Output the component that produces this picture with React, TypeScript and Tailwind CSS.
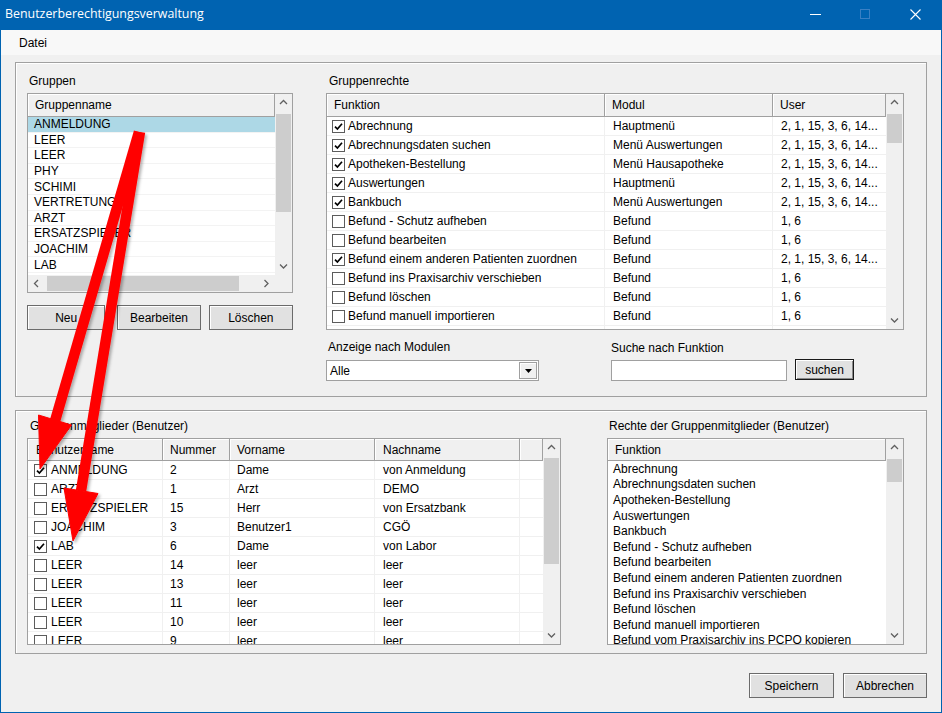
import React from 'react';

const font = "font-['Liberation_Sans',Arial,sans-serif]";

type RightRow = { on: boolean; fn: string; mod: string; user: string };

const many = '2, 1, 15, 3, 6, 14...';

const gruppenRechte: RightRow[] = [
  { on: true, fn: 'Abrechnung', mod: 'Hauptmenü', user: many },
  { on: true, fn: 'Abrechnungsdaten suchen', mod: 'Menü Auswertungen', user: many },
  { on: true, fn: 'Apotheken-Bestellung', mod: 'Menü Hausapotheke', user: many },
  { on: true, fn: 'Auswertungen', mod: 'Hauptmenü', user: many },
  { on: true, fn: 'Bankbuch', mod: 'Menü Auswertungen', user: many },
  { on: false, fn: 'Befund - Schutz aufheben', mod: 'Befund', user: '1, 6' },
  { on: false, fn: 'Befund bearbeiten', mod: 'Befund', user: '1, 6' },
  { on: true, fn: 'Befund einem anderen Patienten zuordnen', mod: 'Befund', user: many },
  { on: false, fn: 'Befund ins Praxisarchiv verschieben', mod: 'Befund', user: '1, 6' },
  { on: false, fn: 'Befund löschen', mod: 'Befund', user: '1, 6' },
  { on: false, fn: 'Befund manuell importieren', mod: 'Befund', user: '1, 6' },
  { on: false, fn: 'Befund vom Praxisarchiv ins PCPO kopieren', mod: 'Befund', user: '1, 6' },
];

const gruppen = [
  'ANMELDUNG',
  'LEER',
  'LEER',
  'PHY',
  'SCHIMI',
  'VERTRETUNG',
  'ARZT',
  'ERSATZSPIELER',
  'JOACHIM',
  'LAB',
];

type Member = { on: boolean; name: string; nr: string; vorname: string; nachname: string };

const mitglieder: Member[] = [
  { on: true, name: 'ANMELDUNG', nr: '2', vorname: 'Dame', nachname: 'von Anmeldung' },
  { on: false, name: 'ARZT', nr: '1', vorname: 'Arzt', nachname: 'DEMO' },
  { on: false, name: 'ERSATZSPIELER', nr: '15', vorname: 'Herr', nachname: 'von Ersatzbank' },
  { on: false, name: 'JOACHIM', nr: '3', vorname: 'Benutzer1', nachname: 'CGÖ' },
  { on: true, name: 'LAB', nr: '6', vorname: 'Dame', nachname: 'von Labor' },
  { on: false, name: 'LEER', nr: '14', vorname: 'leer', nachname: 'leer' },
  { on: false, name: 'LEER', nr: '13', vorname: 'leer', nachname: 'leer' },
  { on: false, name: 'LEER', nr: '11', vorname: 'leer', nachname: 'leer' },
  { on: false, name: 'LEER', nr: '10', vorname: 'leer', nachname: 'leer' },
  { on: false, name: 'LEER', nr: '9', vorname: 'leer', nachname: 'leer' },
];

const mitgliederRechte = [
  'Abrechnung',
  'Abrechnungsdaten suchen',
  'Apotheken-Bestellung',
  'Auswertungen',
  'Bankbuch',
  'Befund - Schutz aufheben',
  'Befund bearbeiten',
  'Befund einem anderen Patienten zuordnen',
  'Befund ins Praxisarchiv verschieben',
  'Befund löschen',
  'Befund manuell importieren',
  'Befund vom Praxisarchiv ins PCPO kopieren',
];

function Check({ on }: { on: boolean }) {
  return (
    <span className="flex h-[13px] w-[13px] shrink-0 items-center justify-center border border-[#5c5c5c] bg-white">
      {on && (
        <svg width="9" height="9" viewBox="0 0 9 9">
          <path d="M1 4.6 L3.4 7 L8 1.8" fill="none" stroke="#000" strokeWidth="1.7" />
        </svg>
      )}
    </span>
  );
}

function Chevron({ dir }: { dir: 'up' | 'down' | 'left' | 'right' }) {
  const d = {
    up: 'M1 5 L4.5 1.5 L8 5',
    down: 'M1 1.5 L4.5 5 L8 1.5',
    left: 'M5 1 L1.5 4.5 L5 8',
    right: 'M1.5 1 L5 4.5 L1.5 8',
  }[dir];
  const vertical = dir === 'up' || dir === 'down';
  return (
    <svg width={vertical ? 9 : 7} height={vertical ? 7 : 9} viewBox={vertical ? '0 0 9 7' : '0 0 7 9'}>
      <path d={d} fill="none" stroke="#606060" strokeWidth="1.3" />
    </svg>
  );
}

function VScroll({ thumb }: { thumb: string }) {
  return (
    <div className="flex w-[17px] shrink-0 flex-col bg-[#f0f0f0]">
      <div className="flex h-[17px] shrink-0 items-center justify-center">
        <Chevron dir="up" />
      </div>
      <div className="flex-1">
        <div className={`mx-[1px] bg-[#cdcdcd] ${thumb}`} />
      </div>
      <div className="flex h-[17px] shrink-0 items-center justify-center">
        <Chevron dir="down" />
      </div>
    </div>
  );
}

function HeadCell({ className, children }: { className: string; children?: React.ReactNode }) {
  return (
    <div
      className={`flex h-full shrink-0 items-center overflow-hidden whitespace-nowrap border-r border-[#a0a0a0] bg-[#f0f0f0] shadow-[inset_1px_1px_0_#ffffff] ${className}`}
    >
      {children}
    </div>
  );
}

function Button({ className, children }: { className: string; children: React.ReactNode }) {
  return (
    <div
      className={`flex items-center justify-center border border-[#6b6b6b] bg-[#e1e1e1] shadow-[inset_1px_1px_0_#ffffff] ${className}`}
    >
      {children}
    </div>
  );
}

function GroupList() {
  return (
    <div className="flex h-[200px] w-[266px] flex-col border border-[#a0a0a0] bg-white">
      <div className="flex min-h-0 flex-1">
        <div className="flex min-w-0 flex-1 flex-col overflow-hidden">
          <div className="flex h-[23px] shrink-0 border-b border-[#a0a0a0]">
            <HeadCell className="flex-1 pl-[7px]">Gruppenname</HeadCell>
          </div>
          {gruppen.map((g, i) => (
            <div
              key={i}
              className={`flex h-[15.6px] shrink-0 items-center border-b border-[#f3f3f3] pl-[6px] text-[12px] leading-[14px] ${
                i === 0 ? 'bg-[#add8e6]' : 'bg-white'
              }`}
            >
              {g}
            </div>
          ))}
        </div>
        <VScroll thumb="mt-[3px] h-[98px]" />
      </div>
      <div className="flex h-[17px] shrink-0">
        <div className="flex flex-1 bg-[#f0f0f0]">
          <div className="flex w-[17px] items-center justify-center">
            <Chevron dir="left" />
          </div>
          <div className="flex flex-1 items-center">
            <div className="ml-[2px] h-[15px] w-[192px] bg-[#cdcdcd]" />
          </div>
          <div className="flex w-[17px] items-center justify-center">
            <Chevron dir="right" />
          </div>
        </div>
        <div className="w-[17px] bg-[#f0f0f0]" />
      </div>
    </div>
  );
}

function RechteTable() {
  return (
    <div className="flex h-[237px] w-[578px] border border-[#a0a0a0] bg-white">
      <div className="flex min-w-0 flex-1 flex-col overflow-hidden">
        <div className="flex h-[23px] shrink-0 border-b border-[#a0a0a0]">
          <HeadCell className="w-[278px] pl-[7px]">Funktion</HeadCell>
          <HeadCell className="w-[168px] pl-[7px]">Modul</HeadCell>
          <HeadCell className="flex-1 pl-[7px]">User</HeadCell>
        </div>
        {gruppenRechte.map((r, i) => (
          <div key={i} className="flex h-[19px] shrink-0 border-b border-[#f0f0f0] leading-[14px]">
            <div className="flex w-[278px] shrink-0 items-center gap-[3px] border-r border-[#f0f0f0] pl-[5px]">
              <Check on={r.on} />
              <span className="whitespace-nowrap">{r.fn}</span>
            </div>
            <div className="flex w-[168px] shrink-0 items-center border-r border-[#f0f0f0] pl-[8px] whitespace-nowrap">
              {r.mod}
            </div>
            <div className="flex flex-1 items-center pl-[8px] whitespace-nowrap">{r.user}</div>
          </div>
        ))}
      </div>
      <VScroll thumb="mt-[3px] h-[29px]" />
    </div>
  );
}

function MitgliederTable() {
  return (
    <div className="flex h-[207px] w-[534px] border border-[#a0a0a0] bg-white">
      <div className="flex min-w-0 flex-1 flex-col overflow-hidden">
        <div className="flex h-[22px] shrink-0 border-b border-[#a0a0a0]">
          <HeadCell className="w-[135px] pl-[8px]">Benutzername</HeadCell>
          <HeadCell className="w-[67px] pl-[7px]">Nummer</HeadCell>
          <HeadCell className="w-[145px] pl-[7px]">Vorname</HeadCell>
          <HeadCell className="w-[145px] pl-[8px]">Nachname</HeadCell>
          <HeadCell className="flex-1" />
        </div>
        {mitglieder.map((m, i) => (
          <div key={i} className="flex h-[19px] shrink-0 border-b border-[#f0f0f0] leading-[14px]">
            <div className="flex w-[135px] shrink-0 items-center gap-[4px] border-r border-[#f0f0f0] pl-[6px]">
              <Check on={m.on} />
              <span className="whitespace-nowrap">{m.name}</span>
            </div>
            <div className="flex w-[67px] shrink-0 items-center border-r border-[#f0f0f0] pl-[7px]">{m.nr}</div>
            <div className="flex w-[145px] shrink-0 items-center border-r border-[#f0f0f0] pl-[7px]">
              {m.vorname}
            </div>
            <div className="flex w-[145px] shrink-0 items-center border-r border-[#f0f0f0] pl-[8px]">
              {m.nachname}
            </div>
            <div className="flex-1" />
          </div>
        ))}
      </div>
      <VScroll thumb="mt-[2px] h-[106px]" />
    </div>
  );
}

function MitgliederRechteTable() {
  return (
    <div className="flex h-[207px] w-[297px] border border-[#a0a0a0] bg-white">
      <div className="flex min-w-0 flex-1 flex-col overflow-hidden">
        <div className="flex h-[22px] shrink-0 border-b border-[#a0a0a0]">
          <HeadCell className="flex-1 pl-[7px]">Funktion</HeadCell>
        </div>
        {mitgliederRechte.map((f, i) => (
          <div key={i} className="flex h-[15.6px] shrink-0 items-center pl-[5px] leading-[14px] whitespace-nowrap">
            {f}
          </div>
        ))}
      </div>
      <VScroll thumb="mt-[3px] h-[23px]" />
    </div>
  );
}

function Arrows() {
  return (
    <svg className="pointer-events-none absolute inset-0" width="942" height="713" viewBox="0 0 942 713">
      <defs>
        <filter id="sh" x="-20%" y="-20%" width="140%" height="140%">
          <feDropShadow dx="2" dy="2" stdDeviation="1.5" floodColor="#000" floodOpacity="0.3" />
        </filter>
      </defs>
      <g filter="url(#sh)" fill="#ff0000" stroke="#ff0000">
        <line x1="138" y1="132" x2="54" y2="421" strokeWidth="10.5" />
        <polygon points="37.5,415 70.5,425 39,469" strokeWidth="1" />
        <line x1="139" y1="132" x2="80" y2="491" strokeWidth="10.5" />
        <polygon points="63,488 97,493.5 72,541" strokeWidth="1" />
      </g>
    </svg>
  );
}

export default function App() {
  return (
    <div
      className={`relative flex h-[713px] w-[942px] flex-col overflow-hidden border-x border-b border-[#0063b1] bg-[#f0f0f0] text-[12px] text-black ${font}`}
    >
      {/* title bar */}
      <div className="-mx-[1px] flex h-[30px] shrink-0 items-center bg-[#0063b1] pb-[2px] text-white">
        <span className="flex-1 pl-[5px] font-['Open_Sans','Noto_Sans',sans-serif] text-[12.4px]">
          Benutzerberechtigungsverwaltung
        </span>
        <div className="flex h-full pr-[2px]">
          <div className="flex w-[50px] items-center justify-center">
            <svg width="11" height="1" viewBox="0 0 11 1">
              <rect width="11" height="1" fill="#ffffff" />
            </svg>
          </div>
          <div className="flex w-[50px] items-center justify-center">
            <svg width="10" height="10" viewBox="0 0 10 10">
              <rect x="0.5" y="0.5" width="9" height="9" fill="none" stroke="#3a80c4" />
            </svg>
          </div>
          <div className="flex w-[50px] items-center justify-center">
            <svg width="11" height="11" viewBox="0 0 11 11">
              <path d="M0.5 0.5 L10.5 10.5 M10.5 0.5 L0.5 10.5" stroke="#ffffff" strokeWidth="1.1" />
            </svg>
          </div>
        </div>
      </div>

      {/* menu */}
      <div className="flex h-[25px] shrink-0 items-center bg-[#f8f8f8] pl-[18px]">Datei</div>

      <div className="flex flex-1 flex-col px-[14px] pt-[7px]">
        {/* top group box */}
        <div className="flex h-[335px] border border-[#a0a0a0] pl-[11px] pt-[11px] shadow-[inset_1px_1px_0_#ffffff]">
          <div className="flex w-[266px] flex-col">
            <div className="h-[14px] pl-[2px] leading-[14px]">Gruppen</div>
            <div className="mt-[5px]">
              <GroupList />
            </div>
            <div className="mt-[12px] flex h-[25px]">
              <Button className="w-[79px]">Neu</Button>
              <Button className="ml-[12px] w-[84px]">Bearbeiten</Button>
              <Button className="ml-[8px] w-[85px]">Löschen</Button>
            </div>
          </div>

          <div className="ml-[33px] flex w-[578px] flex-col">
            <div className="h-[14px] pl-[3px] leading-[14px]">Gruppenrechte</div>
            <div className="mt-[5px]">
              <RechteTable />
            </div>
            <div className="mt-[10px] flex">
              <div className="flex w-[213px] flex-col">
                <div className="h-[14px] pl-[2px] leading-[14px]">Anzeige nach Modulen</div>
                <div className="mt-[6px] flex h-[21px] items-center border border-[#a0a0a0] bg-white p-[1px]">
                  <span className="flex-1 pl-[2px]">Alle</span>
                  <span className="flex h-full w-[18px] items-center justify-center border border-[#a0a0a0] bg-[#f0f0f0] shadow-[inset_1px_1px_0_#ffffff]">
                    <svg width="7" height="4" viewBox="0 0 7 4">
                      <path d="M0 0 H7 L3.5 4 Z" fill="#000000" />
                    </svg>
                  </span>
                </div>
              </div>
              <div className="ml-[72px] flex flex-col">
                <div className="mt-[1px] h-[14px] leading-[14px]">Suche nach Funktion</div>
                <div className="mt-[5px] flex items-center">
                  <div className="h-[21px] w-[176px] border border-[#a0a0a0] bg-white" />
                  <div className="-mt-[2px] ml-[8px] flex h-[21px] w-[59px] items-center justify-center border border-[#1a1a1a] bg-[#e1e1e1] shadow-[inset_1px_1px_0_#ffffff,inset_-1px_-1px_0_#8a8a8a]">
                    suchen
                  </div>
                </div>
              </div>
            </div>
          </div>
        </div>

        {/* bottom group box */}
        <div className="mt-[13px] flex h-[244px] border border-[#a0a0a0] pl-[11px] pt-[8px] shadow-[inset_1px_1px_0_#ffffff]">
          <div className="flex flex-col">
            <div className="h-[14px] pl-[3px] leading-[14px]">Gruppenmitglieder (Benutzer)</div>
            <div className="mt-[5px]">
              <MitgliederTable />
            </div>
          </div>
          <div className="ml-[46px] flex flex-col">
            <div className="h-[14px] pl-[2px] leading-[14px]">Rechte der Gruppenmitglieder (Benutzer)</div>
            <div className="mt-[5px]">
              <MitgliederRechteTable />
            </div>
          </div>
        </div>

        {/* footer buttons */}
        <div className="mt-[19px] flex justify-end gap-[9px]">
          <Button className="h-[25px] w-[85px]">Speichern</Button>
          <Button className="h-[25px] w-[84px]">Abbrechen</Button>
        </div>
      </div>

      <Arrows />
    </div>
  );
}
